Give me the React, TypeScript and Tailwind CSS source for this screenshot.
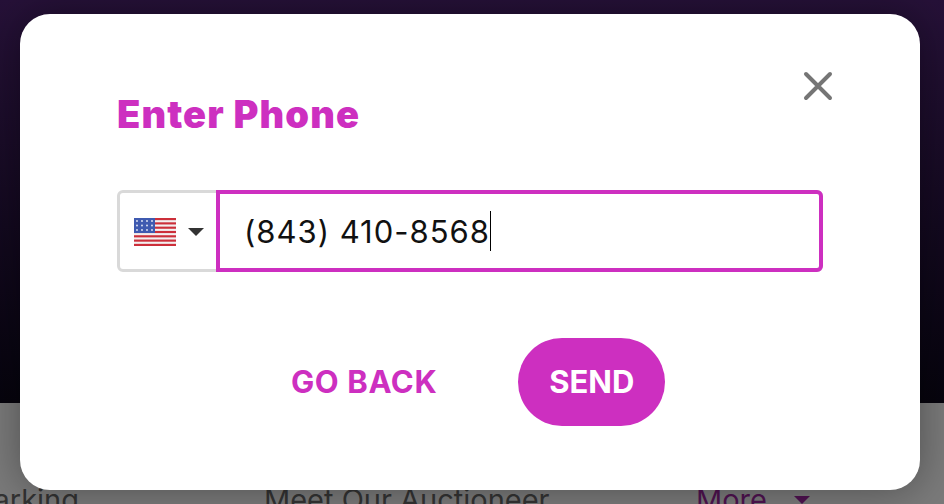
const sans = 'font-["Inter","Noto_Sans",sans-serif]';

function UsFlag() {
  const stripes = [0, 2, 4, 6, 8, 10, 12];
  return (
    <svg width="42" height="28" viewBox="0 0 42 28" className="mt-[1px] shrink-0">
      <rect width="42" height="28" fill="#f3f0f0" />
      {stripes.map((i) => (
        <rect key={i} y={i * 2.154} width="42" height="2.154" fill="#cc2f3a" />
      ))}
      <rect width="21" height="15" fill="#3f5ab0" />
      {[3, 7.5, 12].map((y) =>
        [3, 8, 13, 18].map((x) => <circle key={`${x}-${y}`} cx={x} cy={y} r="0.9" fill="#e8ecf8" />),
      )}
    </svg>
  );
}

function PhoneInput() {
  return (
    <div className="mt-[53px] flex h-[82px] w-[706px] rounded-[6px] border-[3px] border-[#d9d9d9]">
      <div className="flex w-[96px] shrink-0 items-center pl-[14px]">
        <UsFlag />
        <span className="ml-[12px] mt-[1px] h-0 w-0 border-x-[8px] border-t-[8px] border-x-transparent border-t-[#333333]" />
      </div>
      <div className="-my-[3px] -mr-[3px] flex flex-1 items-center rounded-r-[6px] border-[4px] border-[#cd2fc0] pl-[24px]">
        <span className="text-[31px] leading-none tracking-[1px] text-[#111111]">(843) 410-8568</span>
        <span className="h-[40px] w-px bg-black" />
      </div>
    </div>
  );
}

export default function App() {
  return (
    <div className={`relative flex h-[504px] w-[944px] flex-col overflow-hidden ${sans}`}>
      <div className="h-[403px] bg-gradient-to-b from-[#261138] to-[#06040d]" />
      <div className="flex flex-1 items-end bg-[#7a7a7a] text-[29px] leading-none text-[#333333]">
        <div className="-mb-[10px] flex w-full items-center">
          <span className="-ml-[25px] w-[289px]">Parking</span>
          <span className="w-[432px] whitespace-nowrap">Meet Our Auctioneer</span>
          <span className="text-[#4f1250]">More</span>
          <span className="ml-[27px] h-0 w-0 border-x-[8px] border-t-[8px] border-x-transparent border-t-[#4f1250]" />
        </div>
      </div>

      <div className="absolute left-[20px] top-[14px] h-[476px] w-[900px] rounded-[30px] bg-white pl-[97px] pt-[77px] shadow-[0_0_40px_rgba(0,0,0,0.35)]">
        <button className="absolute right-[87px] top-[57px] text-[#757575]">
          <svg width="30" height="30" viewBox="0 0 30 30" fill="none" stroke="currentColor" strokeWidth="4" strokeLinecap="round">
            <path d="M3 3 L27 27 M27 3 L3 27" />
          </svg>
        </button>
        <h2 className="text-[38px] font-black leading-[46px] tracking-[1.1px] text-[#cd2fc0]">Enter Phone</h2>
        <PhoneInput />
        <div className="mt-[66px] flex h-[88px] items-center text-[#cd2fc0]">
          <button className="ml-[174px] text-[31px] font-bold tracking-[0.6px]">GO BACK</button>
          <button className="ml-[81px] h-[88px] w-[147px] rounded-[44px] bg-[#cd2fc0] text-[31px] font-bold text-white">SEND</button>
        </div>
      </div>
    </div>
  );
}
